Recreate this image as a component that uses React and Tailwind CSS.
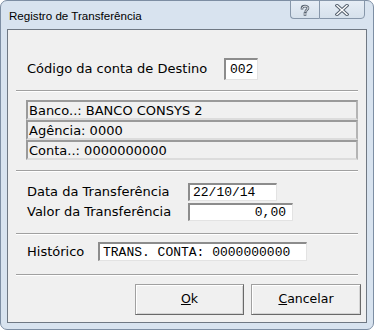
import React from 'react';

const labelFont = { fontFamily: '"DejaVu Sans", Verdana, sans-serif' };

function Etched({ className = '' }) {
  return (
    <div className={`h-[2px] border-t border-[#a0a0a0] border-b border-b-white ${className}`} />
  );
}

function Field({ children, className = '' }) {
  return (
    <div
      className={`bg-white border-t-2 border-l-2 border-[#8c8c8c] border-b border-r border-b-[#e3e3e3] border-r-[#e3e3e3] font-['Liberation_Mono',monospace] text-[13px] text-black leading-none flex items-center ${className}`}
    >
      {children}
    </div>
  );
}

function InfoRow({ children }) {
  return (
    <div className="h-[20px] border-2 border-[#9a9a9a] border-b-[#dcdcdc] border-r-[#b4b4b4] flex items-center pl-[1px] text-[13px] leading-none text-black">
      {children}
    </div>
  );
}

function WinButton({ children, className = '' }) {
  return (
    <button
      className={`h-[31px] bg-[#f0f0f0] border border-[#a0a0a0] border-b-[#696969] border-r-[#696969] shadow-[inset_1px_1px_0_#ffffff,inset_-1px_-1px_0_#d4d4d4] text-[12.5px] text-black ${className}`}
      style={labelFont}
    >
      {children}
    </button>
  );
}

export default function App() {
  return (
    <div className="w-[374px] h-[330px] bg-white">
      <div className="w-[374px] h-[330px] rounded-[7px] border border-[#7d8ea3] bg-[#d8e3ef] flex flex-col">
        {/* Title bar */}
        <div className="h-[28px] flex justify-between">
          <span
            className="pl-[8px] pt-[6px] text-[11.6px] text-black"
            style={{ fontFamily: '"Liberation Sans", Arial, sans-serif' }}
          >
            Registro de Transferência
          </span>
          <div className="flex mr-[8px] h-[19px] -mt-[1px]">
            <div className="w-[29px] h-[19px] border border-[#8797aa] border-r-0 rounded-bl-[4px] bg-gradient-to-b from-[#e6edf5] to-[#d6e1ec] flex items-center justify-center">
              <svg width="10" height="12" viewBox="0 0 10 12">
                <path
                  d="M2 4.2 C2 1.5 8 1.5 8 4 C8 5.6 5.8 5.8 5.8 7.3 M5 9.5 L5 10.5"
                  fill="none"
                  stroke="#54606e"
                  strokeWidth="2.6"
                  strokeLinecap="square"
                />
                <path
                  d="M2 4.2 C2 1.5 8 1.5 8 4 C8 5.6 5.8 5.8 5.8 7.3 M5 9.5 L5 10.5"
                  fill="none"
                  stroke="#ffffff"
                  strokeWidth="1"
                  strokeLinecap="square"
                />
              </svg>
            </div>
            <div className="w-[46px] h-[19px] border border-[#8797aa] rounded-br-[4px] bg-gradient-to-b from-[#e6edf5] to-[#d6e1ec] flex items-center justify-center">
              <svg width="14" height="12" viewBox="0 0 14 12">
                <path d="M2 1.5 L12 10.5 M12 1.5 L2 10.5" stroke="#54606e" strokeWidth="3.4" strokeLinecap="square" />
                <path d="M2 1.5 L12 10.5 M12 1.5 L2 10.5" stroke="#ffffff" strokeWidth="1.4" strokeLinecap="square" />
              </svg>
            </div>
          </div>
        </div>

        {/* Client area */}
        <div className="ml-[6px] w-[360px] h-[294px] border border-[#6f7883] bg-[#f0f0f0] flex flex-col" style={labelFont}>
          {/* Conta destino */}
          <div className="h-[60px] pt-[28px]">
            <div className="h-[22px] flex items-center pl-[19px]">
              <span className="w-[197px] text-[13px] text-black">Código da conta de Destino</span>
              <Field className="w-[34px] h-[22px] pl-[4px]">002</Field>
            </div>
          </div>

          <Etched className="ml-[8px] w-[342px]" />

          {/* Dados banco */}
          <div className="ml-[18px] w-[332px] mt-[8px] flex flex-col">
            <InfoRow>Banco..: BANCO CONSYS 2</InfoRow>
            <InfoRow>Agência: 0000</InfoRow>
            <InfoRow>Conta..: 0000000000</InfoRow>
          </div>

          <Etched className="ml-[8px] w-[342px] mt-[10px]" />

          {/* Data / valor */}
          <div className="mt-[11px] pl-[19px] flex flex-col gap-[2px]">
            <div className="h-[18px] flex items-center">
              <span className="w-[161px] text-[13px] text-black">Data da Transferência</span>
              <Field className="w-[89px] h-[18px] pl-[3px]">22/10/14</Field>
            </div>
            <div className="h-[18px] flex items-center">
              <span className="w-[161px] text-[13px] text-black">Valor da Transferência</span>
              <Field className="w-[105px] h-[18px] justify-end pr-[6px]">0,00</Field>
            </div>
          </div>

          <Etched className="ml-[8px] w-[342px] mt-[12px]" />

          {/* Histórico */}
          <div className="mt-[7px] pl-[19px] h-[19px] flex items-center">
            <span className="w-[71px] text-[13px] text-black">Histórico</span>
            <Field className="w-[209px] h-[19px] pl-[3px]">TRANS. CONTA: 0000000000</Field>
          </div>

          <Etched className="ml-[8px] w-[342px] mt-[13px]" />

          {/* Botões */}
          <div className="mt-[8px] flex justify-end gap-[7px] pr-[5px]">
            <WinButton className="w-[109px]">
              <span className="underline">O</span>k
            </WinButton>
            <WinButton className="w-[110px]">
              <span className="underline">C</span>ancelar
            </WinButton>
          </div>
        </div>
      </div>
    </div>
  );
}
